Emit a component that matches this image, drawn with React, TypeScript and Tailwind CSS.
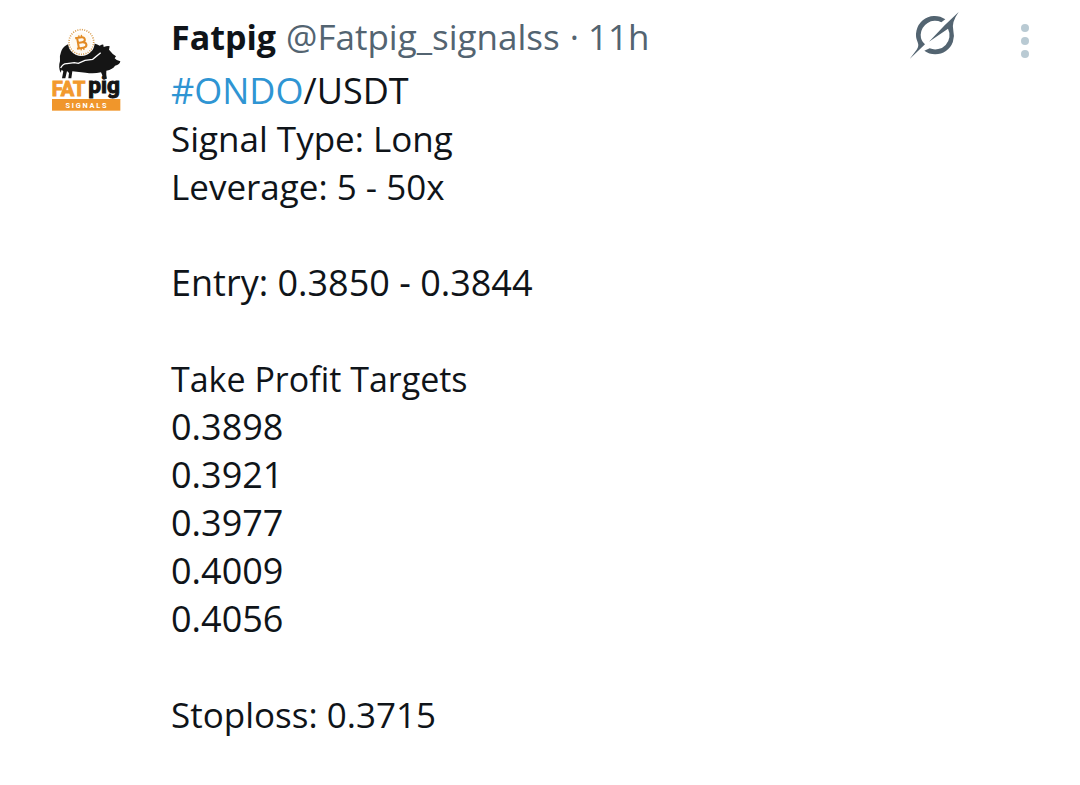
const targets = ["0.3898", "0.3921", "0.3977", "0.4009", "0.4056"];

function Avatar() {
  return (
    <svg viewBox="24 15 288 288" className="size-24" role="img" aria-label="Fatpig Signals">
      <path
        fill="#151515"
        d="M92 188 Q84 172 90 153 Q88 137 93 126 Q96 112 111 104 Q135 94 165 98 Q195 97 209 107 Q217 103 220 104 L221 111 Q233 107 239 109 L237 119 Q248 133 258 139 L254 145 Q258 151 271 154 Q270 164 255 167 Q249 178 229 182 Q228 191 230 207 L219 207 Q217 193 213 187 Q190 192 167 188 L127 184 L124 205 L115 205 L117 189 L111 183 L106 205 L96 205 L100 184 L95 179 Z"
      />
      <path
        d="M92 174 Q99 160 111 161 L133 158 L145 160 L165 151 L188 148 L212 128"
        fill="none"
        stroke="#fff"
        strokeWidth="4"
      />
      <circle cx="154" cy="98" r="40" fill="#fff" />
      <circle
        cx="154"
        cy="96"
        r="37"
        fill="none"
        stroke="#d99b4a"
        strokeWidth="5"
        strokeDasharray="3 4"
      />
      <circle cx="154" cy="98" r="31" fill="#fffaf1" />
      <g fill="none" stroke="#e38b24" strokeWidth="6" transform="rotate(-10 154 98)">
        <path d="M144 82 V114 M138 82 H157 Q166 83 166 90 Q166 97 157 97 H144 M157 97 Q168 98 168 106 Q168 114 157 114 H138" />
        <path d="M150 75 V82 M158 75 V82 M150 114 V121 M158 114 V121" strokeWidth="4" />
      </g>
      <text
        x="65"
        y="258"
        fill="#f29a2e"
        stroke="#f29a2e"
        strokeWidth="3"
        fontSize="60"
        className="font-['Roboto',sans-serif] font-bold"
      >
        FAT
      </text>
      <text
        x="175"
        y="248"
        fill="#151515"
        stroke="#151515"
        strokeWidth="3"
        fontSize="68"
        className="font-['Roboto',sans-serif] font-bold"
      >
        pig
      </text>
      <rect x="66" y="267" width="205" height="35" fill="#f0962b" />
      <text
        x="168"
        y="293"
        fill="#fff"
        fontSize="22"
        textAnchor="middle"
        className="font-['Roboto',sans-serif] font-bold"
      >
        S I G N A L S
      </text>
    </svg>
  );
}

function GrokIcon() {
  return (
    <svg viewBox="56 33 156 156" className="size-13" fill="currentColor" aria-hidden="true">
      <path d="M165 58 A56 56 0 0 0 82 127 Q87 139 79 149 L58 177 L104 133 Q91 122 91 104 A43 43 0 0 1 153 67 Z" />
      <path d="M205 36 L163 76 L116 125 L173 86 A43 43 0 0 1 118 145 L102 152 A56 56 0 0 0 189 92 Q182 68 205 36 Z" />
    </svg>
  );
}

export default function App() {
  return (
    <main className="min-h-screen bg-white font-['Open_Sans',sans-serif] text-[#0f1419]">
      <article className="flex items-start pt-[11px] pr-[39px] pl-[38px]">
        <div className="mt-1 mr-[37px] shrink-0">
          <Avatar />
        </div>
        <div className="min-w-0 flex-1 text-[35px]/12">
          <header className="flex items-start justify-between">
            <div className="flex items-baseline gap-2.5 pt-0.5 whitespace-nowrap text-[#536471]">
              <h1 className="text-[34px]/12 font-bold text-[#0f1419]">Fatpig</h1>
              <span>@Fatpig_signalss</span>
              <span>· 11h</span>
            </div>
            <div className="flex items-start">
              <button type="button" aria-label="Explain this post" className="mr-12 text-[#536471]">
                <GrokIcon />
              </button>
              <button type="button" aria-label="More" className="mt-2 p-1">
                <svg viewBox="0 0 24 40" className="h-10 w-6" fill="#b9cad3" aria-hidden="true">
                  <circle cx="12" cy="5" r="4" />
                  <circle cx="12" cy="18" r="4" />
                  <circle cx="12" cy="31" r="4" />
                </svg>
              </button>
            </div>
          </header>
          <div className="grid gap-12">
            <div>
              <p className="text-4xl/12">
                <a href="#ondo" className="text-[#2f95d3]">#ONDO</a>/USDT
              </p>
              <p>Signal Type: Long</p>
              <p>Leverage: 5 - 50x</p>
            </div>
            <p className="text-4xl/12">Entry: 0.3850 - 0.3844</p>
            <div>
              <h2 className="text-[34px]/12">Take Profit Targets</h2>
              <ul className="text-4xl/12">
                {targets.map((target) => (
                  <li key={target}>{target}</li>
                ))}
              </ul>
            </div>
            <p>Stoploss: 0.3715</p>
          </div>
        </div>
      </article>
    </main>
  );
}
